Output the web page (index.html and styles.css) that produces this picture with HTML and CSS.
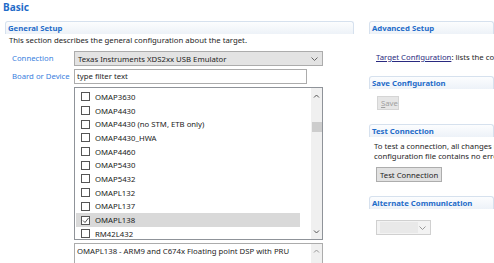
FILE: index.html
```html
<!DOCTYPE html>
<html lang="en">
<head>
  <meta charset="UTF-8" />
  <title>Target Configuration - Basic</title>
  <link rel="stylesheet" href="styles.css">
</head>
<body>
  <div class="page">
    <h1 class="page-title">Basic</h1>

    <div class="columns">
      <!-- General Setup -->
      <section class="section general">
        <div class="section-head">General Setup</div>
        <p class="section-desc">This section describes the general configuration about the target.</p>

        <div class="field-row">
          <span class="field-label">Connection</span>
          <div class="combo wide">
            <span class="combo-text">Texas Instruments XDS2xx USB Emulator</span>
            <svg class="chevron" width="7" height="4" viewBox="0 0 7 4"><path d="M0.5 0.5 L3.5 3.5 L6.5 0.5" fill="none" stroke="#666" stroke-width="1"/></svg>
          </div>
        </div>

        <div class="field-row">
          <span class="field-label">Board or Device</span>
          <div class="filter">type filter text</div>
        </div>

        <div class="field-row">
          <span class="field-label"></span>
          <div class="device-list">
            <ul class="device-items">
              <li class="device"><span class="check"></span>OMAP3630</li>
              <li class="device"><span class="check"></span>OMAP4430</li>
              <li class="device"><span class="check"></span>OMAP4430 (no STM, ETB only)</li>
              <li class="device"><span class="check"></span>OMAP4430_HWA</li>
              <li class="device"><span class="check"></span>OMAP4460</li>
              <li class="device"><span class="check"></span>OMAP5430</li>
              <li class="device"><span class="check"></span>OMAP5432</li>
              <li class="device"><span class="check"></span>OMAPL132</li>
              <li class="device"><span class="check"></span>OMAPL137</li>
              <li class="device selected"><span class="check checked"><svg width="7" height="7" viewBox="0 0 7 7"><path d="M1 3.5 L3 5.5 L6.5 1" fill="none" stroke="#555" stroke-width="1"/></svg></span>OMAPL138</li>
              <li class="device"><span class="check"></span>RM42L432</li>
            </ul>
            <div class="scrollbar">
              <svg class="arrow" width="7" height="4" viewBox="0 0 7 4"><path d="M1 3.5 L3.5 1 L6 3.5" fill="none" stroke="#555" stroke-width="1"/></svg>
              <div class="track"><div class="thumb"></div></div>
              <svg class="arrow" width="7" height="4" viewBox="0 0 7 4"><path d="M1 0.5 L3.5 3 L6 0.5" fill="none" stroke="#555" stroke-width="1"/></svg>
            </div>
          </div>
        </div>

        <div class="field-row">
          <span class="field-label"></span>
          <div class="device-desc">
            <span class="desc-text">OMAPL138 - ARM9 and C674x Floating point DSP with PRU</span>
            <div class="scrollbar short">
              <svg class="arrow" width="7" height="4" viewBox="0 0 7 4"><path d="M1 3.5 L3.5 1 L6 3.5" fill="none" stroke="#999" stroke-width="1"/></svg>
            </div>
          </div>
        </div>
      </section>

      <!-- Right column -->
      <div class="side">
        <section class="section">
          <div class="section-head">Advanced Setup</div>
          <p class="side-link"><a href="#">Target Configuration</a>: lists the configuration options for the target.</p>
        </section>

        <section class="section save">
          <div class="section-head">Save Configuration</div>
          <button class="btn disabled save-btn" disabled><u>S</u>ave</button>
        </section>

        <section class="section test">
          <div class="section-head">Test Connection</div>
          <p class="side-text">To test a connection, all changes must have been saved, the<br>configuration file contains no errors and the connection type supports it.</p>
          <button class="btn test-btn">Test Connection</button>
        </section>

        <section class="section alt">
          <div class="section-head">Alternate Communication</div>
          <div class="combo small disabled">
            <span class="combo-text"></span>
            <svg class="chevron" width="7" height="4" viewBox="0 0 7 4"><path d="M0.5 0.5 L3.5 3.5 L6.5 0.5" fill="none" stroke="#999" stroke-width="1"/></svg>
          </div>
        </section>
      </div>
    </div>
  </div>
</body>
</html>
```
FILE: styles.css
```css
:root {
  --title-blue: #1f6cc9;
  --label-blue: #3a80de;
  --head-border: #d6e1ee;
  --text: #1e1e1e;
  --field-border: #acacac;
}
* {
  margin: 0;
  padding: 0;
  box-sizing: border-box;
}
body {
  font-family: "Noto Sans", "Liberation Sans", sans-serif;
  font-size: 7.75px;
  color: var(--text);
  background: #fff;
  overflow: hidden;
}
.page {
  padding: 1px 0 0 3px;
}
.page-title {
  font-size: 10px;
  font-weight: bold;
  color: var(--title-blue);
  line-height: 12px;
  margin-bottom: 8px;
}
.columns {
  display: grid;
  grid-template-columns: 349px 125px;
  column-gap: 15px;
  padding-left: 2px;
}
/* Section headers */
.section-head {
  height: 13px;
  line-height: 12px;
  padding-left: 2px;
  font-weight: bold;
  color: var(--title-blue);
  border: 1px solid var(--head-border);
  border-bottom: none;
  border-radius: 3px 3px 0 0;
  background: linear-gradient(to bottom, #fcfdfe, #edf2f8);
  white-space: nowrap;
}
.section-desc {
  margin-top: 1px;
  padding-left: 4px;
  line-height: 10px;
}
/* Form rows */
.field-row {
  display: flex;
  margin-top: 3px;
}
.section-desc + .field-row {
  margin-top: 6px;
}
.field-label {
  width: 69px;
  flex: none;
  padding-left: 7px;
  color: var(--label-blue);
  line-height: 15px;
}
.combo {
  height: 15px;
  display: flex;
  align-items: center;
  justify-content: space-between;
  background: #e3e3e3;
  border: 1px solid var(--field-border);
  padding: 0 4px 0 3px;
}
.combo.wide {
  width: 249px;
}
.combo-text {
  white-space: nowrap;
}
.filter {
  width: 233px;
  height: 15px;
  line-height: 13px;
  padding-left: 2px;
  border: 1px solid var(--field-border);
  background: #fff;
}
/* Device list */
.device-list {
  width: 249px;
  height: 153px;
  border: 1px solid #8f9399;
  display: flex;
  justify-content: space-between;
  overflow: hidden;
}
.device-items {
  list-style: none;
  padding: 2px 0 0 1px;
}
.device {
  width: 224px;
  height: 13.7px;
  display: flex;
  align-items: center;
  white-space: nowrap;
  color: #222;
}
.device.selected {
  background: #d9d9d9;
}
.check {
  width: 9px;
  height: 9px;
  flex: none;
  margin: 0 5px;
  border: 1px solid #555;
  background: #fff;
  display: flex;
  align-items: center;
  justify-content: center;
}
.scrollbar {
  width: 11px;
  background: #f0f0f0;
  display: flex;
  flex-direction: column;
  align-items: center;
  padding: 6px 0 5px;
}
.track {
  flex: 1;
  width: 100%;
  padding-top: 24px;
}
.thumb {
  width: 10px;
  height: 10px;
  margin: 0 auto;
  background: #cdcdcd;
}
.device-desc {
  width: 249px;
  height: 30px;
  border: 1px solid var(--field-border);
  display: flex;
  justify-content: space-between;
}
.desc-text {
  padding: 2px 0 0 2px;
  white-space: nowrap;
}
.scrollbar.short {
  padding-top: 5px;
}
/* Right column */
.side {
  white-space: nowrap;
  overflow: hidden;
}
.side-link {
  margin-top: 18px;
  padding-left: 7px;
  line-height: 10px;
}
.side-link a {
  color: #2a2a80;
}
.save .section-head,
.test .section-head,
.alt .section-head {
  margin-top: 14px;
}
.btn {
  display: block;
  font: inherit;
  height: 15px;
  border: 1px solid #adadad;
  background: #e1e1e1;
  color: var(--text);
  padding: 0 3px;
}
.save-btn {
  margin: 7px 0 0 8px;
  height: 14px;
  width: 22px;
  color: #a0a0a0;
  border-color: #d5d5d5;
  background: #e6e6e6;
}
.side-text {
  margin-top: 4px;
  padding-left: 5px;
  line-height: 10px;
}
.test-btn {
  margin: 6px 0 0 7px;
  width: 66px;
}
.combo.small {
  width: 55px;
  margin: 11px 0 0 7px;
  background: #f3f3f3;
  border-color: #d0d0d0;
}
.combo.small .combo-text {
  width: 38px;
  height: 11px;
  background: #e9e9e9;
}
```
